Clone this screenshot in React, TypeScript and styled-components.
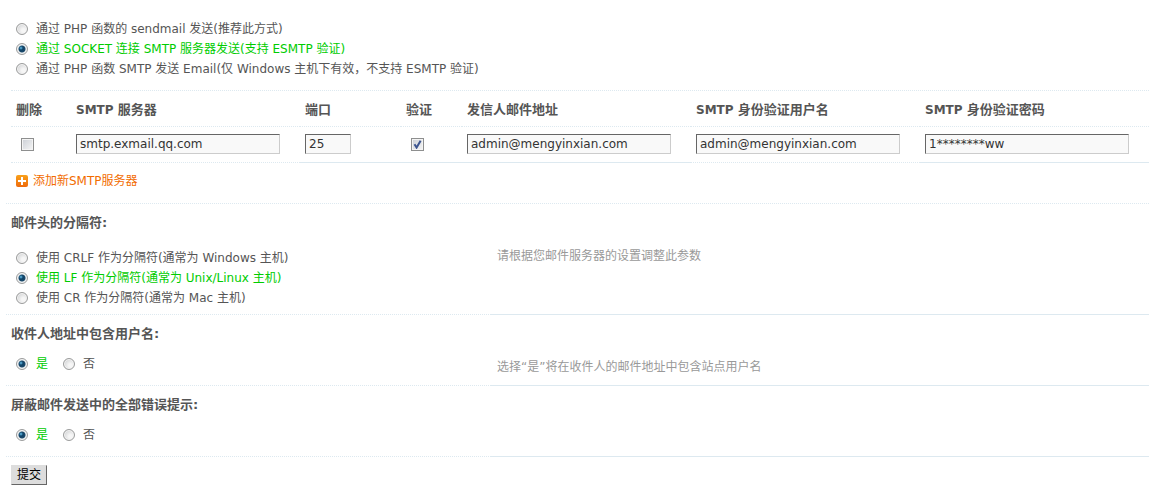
import React from "react";
import styled, { createGlobalStyle } from "styled-components";

const latin = '"DejaVu Sans", "Noto Sans CJK SC", sans-serif';
const line = "#dde9f0";

const Global = createGlobalStyle`
  body { margin: 0; background: #fff; color: #555; font: 12px/20px ${latin}; }
  * { box-sizing: border-box; }
`;

const Form = styled.form`
  padding: 18px 0 0 6px;
`;

const Choices = styled.div<{ $inline?: boolean }>`
  display: flex;
  flex-direction: ${(p) => (p.$inline ? "row" : "column")};
  align-items: flex-start;
  gap: ${(p) => (p.$inline ? "15px" : "0")};
  padding-left: 10px;
`;

const Choice = styled.label`
  display: flex;
  align-items: center;
  gap: 8px;
  height: 20px;
  padding-top: 2px;
  white-space: nowrap;
  &:has(input:checked) { color: #0c0; }
`;

const Radio = styled.input`
  appearance: none;
  width: 12px;
  height: 12px;
  margin: 0;
  border: 1px solid #9b9c9c;
  border-radius: 50%;
  background: radial-gradient(circle at 65% 65%, #f6f6f6 20%, #c4c6c8 100%);
  box-shadow: inset 0 0 0 1px #f4f4f4;
  &:checked {
    background: radial-gradient(circle at 4px 4px, #8fd0ee 0, #2f80ad 1px, transparent 2px),
      radial-gradient(circle at center, #124468 2px, #1d4a6b 3px, #e4e9ec 4px);
  }
`;

const Check = styled.input`
  appearance: none;
  display: block;
  width: 13px;
  height: 13px;
  margin: 0 0 0 5px;
  border: 1px solid #8e8f8f;
  background: linear-gradient(135deg, #cbcfd5, #f6f6f6);
  box-shadow: inset 0 0 0 1px #f4f4f4;
  &:checked {
    background: url("data:image/svg+xml,%3Csvg xmlns='http://www.w3.org/2000/svg' viewBox='0 0 11 11'%3E%3Cpath d='M2.5 5.2 4.6 8.6 8.6 1.8' fill='none' stroke='%233d5590' stroke-width='2'/%3E%3C/svg%3E"), linear-gradient(135deg, #cbcfd5, #f6f6f6);
  }
`;

const Servers = styled.table`
  width: calc(100% - 5px);
  margin: 12px 0 0 5px;
  border-collapse: separate;
  border-spacing: 0;
  table-layout: fixed;
  border-top: 1px dotted ${line};
`;

const Head = styled.th`
  height: 36px;
  padding: 2px 0 0 5px;
  border-bottom: 1px dotted ${line};
  text-align: left;
  font-size: 13px;
  line-height: 20px;
  white-space: nowrap;
`;

const Cell = styled.td<{ $solid?: boolean }>`
  height: 36px;
  padding: 0 0 1px 5px;
  border-bottom: 1px ${(p) => (p.$solid ? "solid" : "dotted")} ${line};
`;

const Latin = styled.span`
  font-size: 12px;
`;

const Field = styled.input<{ $short?: boolean }>`
  display: block;
  width: ${(p) => (p.$short ? "46px" : "204px")};
  height: 20px;
  padding: 0 3px;
  border: 1px solid;
  border-color: #666 #ccc #ccc #666;
  background: #f9f9f9;
  color: #333;
  font: 12px/18px ${latin};
`;

const AddRow = styled.div`
  height: 41px;
  padding: 8px 0 0 10px;
  border-bottom: 1px dotted ${line};
`;

const AddLink = styled.a`
  display: inline-flex;
  align-items: center;
  gap: 5px;
  color: #f26c00;
  text-decoration: none;
`;

const Setting = styled.fieldset`
  min-width: 0;
  margin: 0;
  padding: 9px 0 0;
  border: 0;
`;

const Title = styled.legend`
  float: left;
  width: 100%;
  padding: 0 0 0 5px;
  font-size: 13px;
  font-weight: bold;
  line-height: 20px;
`;

const Body = styled.div<{ $tall?: boolean }>`
  clear: both;
  display: grid;
  grid-template-columns: 485px 1fr;
  height: ${(p) => (p.$tall ? "82px" : "42px")};
`;

const Options = styled.div<{ $tall?: boolean }>`
  padding-top: ${(p) => (p.$tall ? "14px" : "9px")};
  border-bottom: 1px dotted ${line};
`;

const Hint = styled.div`
  padding: 13px 0 0 6px;
  border-bottom: 1px solid ${line};
  color: #999;
`;

const Submit = styled.button`
  display: block;
  width: 36px;
  height: 20px;
  margin: 8px 0 0 5px;
  padding: 0;
  border: 1px solid;
  border-color: #ddd #666 #666 #ddd;
  background: #ddd;
  color: #000;
  font: 12px/18px ${latin};
`;

const PlusIcon = () => (
  <svg width="12" height="12" viewBox="0 0 12 12" aria-hidden="true">
    <defs>
      <linearGradient id="orange" x1="0" y1="0" x2="0" y2="1">
        <stop offset="0" stopColor="#f9a11b" />
        <stop offset="1" stopColor="#ee6a0c" />
      </linearGradient>
    </defs>
    <rect width="12" height="12" rx="2" fill="url(#orange)" />
    <path d="M5 2h2v3h3v2H7v3H5V7H2V5h3z" fill="#fff" />
  </svg>
);

type GroupProps = { name: string; options: string[]; selected: number; inline?: boolean };

const RadioGroup = ({ name, options, selected, inline }: GroupProps) => (
  <Choices $inline={inline}>
    {options.map((text, i) => (
      <Choice key={text}>
        <Radio type="radio" name={name} defaultChecked={i === selected} />
        {text}
      </Choice>
    ))}
  </Choices>
);

export default function App() {
  return (
    <>
      <Global />
      <Form onSubmit={(e) => e.preventDefault()}>
        <RadioGroup
          name="method"
          selected={1}
          options={[
            "通过 PHP 函数的 sendmail 发送(推荐此方式)",
            "通过 SOCKET 连接 SMTP 服务器发送(支持 ESMTP 验证)",
            "通过 PHP 函数 SMTP 发送 Email(仅 Windows 主机下有效，不支持 ESMTP 验证)",
          ]}
        />
        <Servers>
          <colgroup>
            <col style={{ width: 60 }} />
            <col style={{ width: 229 }} />
            <col style={{ width: 101 }} />
            <col style={{ width: 61 }} />
            <col style={{ width: 229 }} />
            <col style={{ width: 229 }} />
            <col />
          </colgroup>
          <thead>
            <tr>
              <Head>删除</Head>
              <Head><Latin>SMTP </Latin>服务器</Head>
              <Head>端口</Head>
              <Head>验证</Head>
              <Head>发信人邮件地址</Head>
              <Head><Latin>SMTP </Latin>身份验证用户名</Head>
              <Head><Latin>SMTP </Latin>身份验证密码</Head>
            </tr>
          </thead>
          <tbody>
            <tr>
              <Cell><Check type="checkbox" aria-label="删除" /></Cell>
              <Cell><Field aria-label="SMTP 服务器" defaultValue="smtp.exmail.qq.com" /></Cell>
              <Cell $solid><Field $short aria-label="端口" defaultValue="25" /></Cell>
              <Cell $solid><Check type="checkbox" aria-label="验证" defaultChecked /></Cell>
              <Cell $solid><Field aria-label="发信人邮件地址" defaultValue="admin@mengyinxian.com" /></Cell>
              <Cell><Field aria-label="SMTP 身份验证用户名" defaultValue="admin@mengyinxian.com" /></Cell>
              <Cell $solid><Field aria-label="SMTP 身份验证密码" defaultValue="1********ww" /></Cell>
            </tr>
          </tbody>
        </Servers>
        <AddRow>
          <AddLink href="#add"><PlusIcon />添加新SMTP服务器</AddLink>
        </AddRow>
        <Setting>
          <Title>邮件头的分隔符:</Title>
          <Body $tall>
            <Options $tall>
              <RadioGroup
                name="delimiter"
                selected={1}
                options={[
                  "使用 CRLF 作为分隔符(通常为 Windows 主机)",
                  "使用 LF 作为分隔符(通常为 Unix/Linux 主机)",
                  "使用 CR 作为分隔符(通常为 Mac 主机)",
                ]}
              />
            </Options>
            <Hint>请根据您邮件服务器的设置调整此参数</Hint>
          </Body>
        </Setting>
        <Setting>
          <Title>收件人地址中包含用户名:</Title>
          <Body>
            <Options>
              <RadioGroup inline name="username" selected={0} options={["是", "否"]} />
            </Options>
            <Hint>选择“是”将在收件人的邮件地址中包含站点用户名</Hint>
          </Body>
        </Setting>
        <Setting>
          <Title>屏蔽邮件发送中的全部错误提示:</Title>
          <Body>
            <Options>
              <RadioGroup inline name="silent" selected={0} options={["是", "否"]} />
            </Options>
            <Hint />
          </Body>
        </Setting>
        <Submit type="submit">提交</Submit>
      </Form>
    </>
  );
}
